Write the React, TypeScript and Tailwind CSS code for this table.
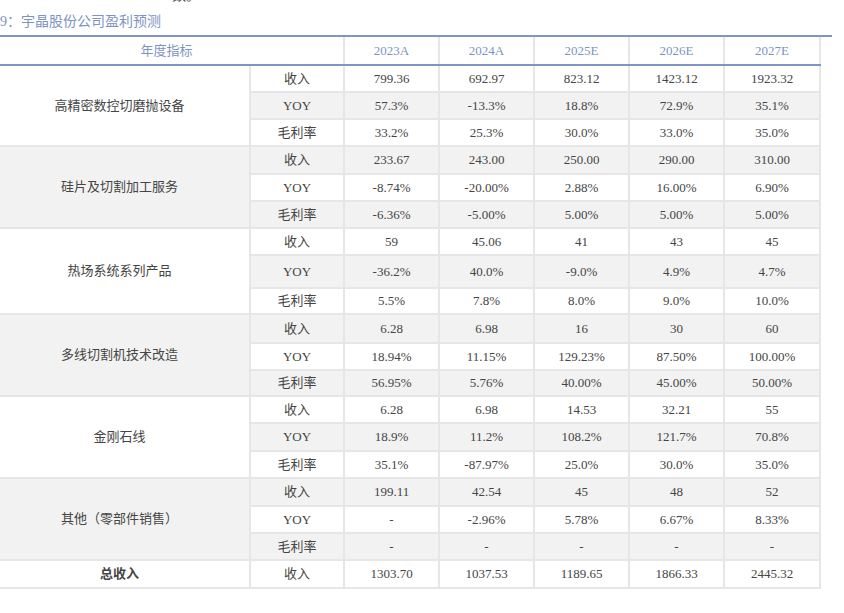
type Group = {
  name: string;
  rows: string[][];
};

const groups: Group[] = [
  {
    name: '高精密数控切磨抛设备',
    rows: [
      ['收入', '799.36', '692.97', '823.12', '1423.12', '1923.32'],
      ['YOY', '57.3%', '-13.3%', '18.8%', '72.9%', '35.1%'],
      ['毛利率', '33.2%', '25.3%', '30.0%', '33.0%', '35.0%'],
    ],
  },
  {
    name: '硅片及切割加工服务',
    rows: [
      ['收入', '233.67', '243.00', '250.00', '290.00', '310.00'],
      ['YOY', '-8.74%', '-20.00%', '2.88%', '16.00%', '6.90%'],
      ['毛利率', '-6.36%', '-5.00%', '5.00%', '5.00%', '5.00%'],
    ],
  },
  {
    name: '热场系统系列产品',
    rows: [
      ['收入', '59', '45.06', '41', '43', '45'],
      ['YOY', '-36.2%', '40.0%', '-9.0%', '4.9%', '4.7%'],
      ['毛利率', '5.5%', '7.8%', '8.0%', '9.0%', '10.0%'],
    ],
  },
  {
    name: '多线切割机技术改造',
    rows: [
      ['收入', '6.28', '6.98', '16', '30', '60'],
      ['YOY', '18.94%', '11.15%', '129.23%', '87.50%', '100.00%'],
      ['毛利率', '56.95%', '5.76%', '40.00%', '45.00%', '50.00%'],
    ],
  },
  {
    name: '金刚石线',
    rows: [
      ['收入', '6.28', '6.98', '14.53', '32.21', '55'],
      ['YOY', '18.9%', '11.2%', '108.2%', '121.7%', '70.8%'],
      ['毛利率', '35.1%', '-87.97%', '25.0%', '30.0%', '35.0%'],
    ],
  },
  {
    name: '其他（零部件销售）',
    rows: [
      ['收入', '199.11', '42.54', '45', '48', '52'],
      ['YOY', '-', '-2.96%', '5.78%', '6.67%', '8.33%'],
      ['毛利率', '-', '-', '-', '-', '-'],
    ],
  },
];

const totalRow = ['收入', '1303.70', '1037.53', '1189.65', '1866.33', '2445.32'];

const years = ['2023A', '2024A', '2025E', '2026E', '2027E'];

// row heights, read off the screenshot, one per body row
const rowHeights = [
  'h-[27px]', 'h-[27px]', 'h-[27px]',
  'h-[28px]', 'h-[27px]', 'h-[27px]',
  'h-[27px]', 'h-[33px]', 'h-[26px]',
  'h-[29px]', 'h-[27px]', 'h-[26px]',
  'h-[27px]', 'h-[28px]', 'h-[27px]',
  'h-[28px]', 'h-[27px]', 'h-[27px]',
  'h-[28px]',
];

const cellClasses = 'border-2 border-[#e6e6e6] p-0 text-center align-middle';

const App = () => {
  let rowIndex = 0;

  return (
    <div className="h-[613px] w-[844px] overflow-hidden bg-white font-['Liberation_Serif','Noto_Sans_CJK_SC',serif] text-[13px] text-[#454545]">
      <p className="-mt-[14px] h-[20px] pl-[172px] text-[14px] leading-[20px]">数。</p>
      <p className="mt-[6px] h-[20px] text-[14px] leading-[20px] text-[#7d93c6]">9：宇晶股份公司盈利预测</p>
      <div className="mt-[3px] h-[2px] w-[832px] bg-[#7f95c5]" />

      <table className="w-[820px] table-fixed border-collapse">
        <colgroup>
          <col className="w-[250px]" />
          <col className="w-[94px]" />
          <col className="w-[95px]" />
          <col className="w-[95px]" />
          <col className="w-[95px]" />
          <col className="w-[95px]" />
          <col className="w-[96px]" />
        </colgroup>
        <thead>
          <tr className="h-[28px]">
            <th
              colSpan={2}
              className="border-x-2 border-b-2 border-x-[#e6e6e6] border-b-[#7f95c5] border-l-0 p-0 pr-[10px] text-center font-normal text-[#7d93c6]"
            >
              年度指标
            </th>
            {years.map((year) => (
              <th
                key={year}
                className="border-x-2 border-b-2 border-x-[#e6e6e6] border-b-[#7f95c5] p-0 text-center font-normal text-[#7d93c6]"
              >
                {year}
              </th>
            ))}
          </tr>
        </thead>
        <tbody>
          {groups.map((group) =>
            group.rows.map((row, index) => {
              const height = rowHeights[rowIndex];
              const isGray = rowIndex % 2 === 1;
              rowIndex += 1;

              return (
                <tr key={`${group.name}-${row[0]}`} className={`${height} ${isGray ? 'bg-[#f2f2f2]' : 'bg-white'}`}>
                  {index === 0 ? (
                    <td rowSpan={3} className={`${cellClasses} border-l-0 pr-[10px]`}>
                      {group.name}
                    </td>
                  ) : null}
                  {row.map((value, cellIndex) => (
                    <td key={cellIndex} className={cellClasses}>
                      {value}
                    </td>
                  ))}
                </tr>
              );
            }),
          )}
          <tr className={`${rowHeights[18]} bg-white`}>
            <td className={`${cellClasses} border-l-0 pr-[10px] font-bold`}>总收入</td>
            {totalRow.map((value, cellIndex) => (
              <td key={cellIndex} className={cellClasses}>
                {value}
              </td>
            ))}
          </tr>
        </tbody>
      </table>
    </div>
  );
};

export default App;
